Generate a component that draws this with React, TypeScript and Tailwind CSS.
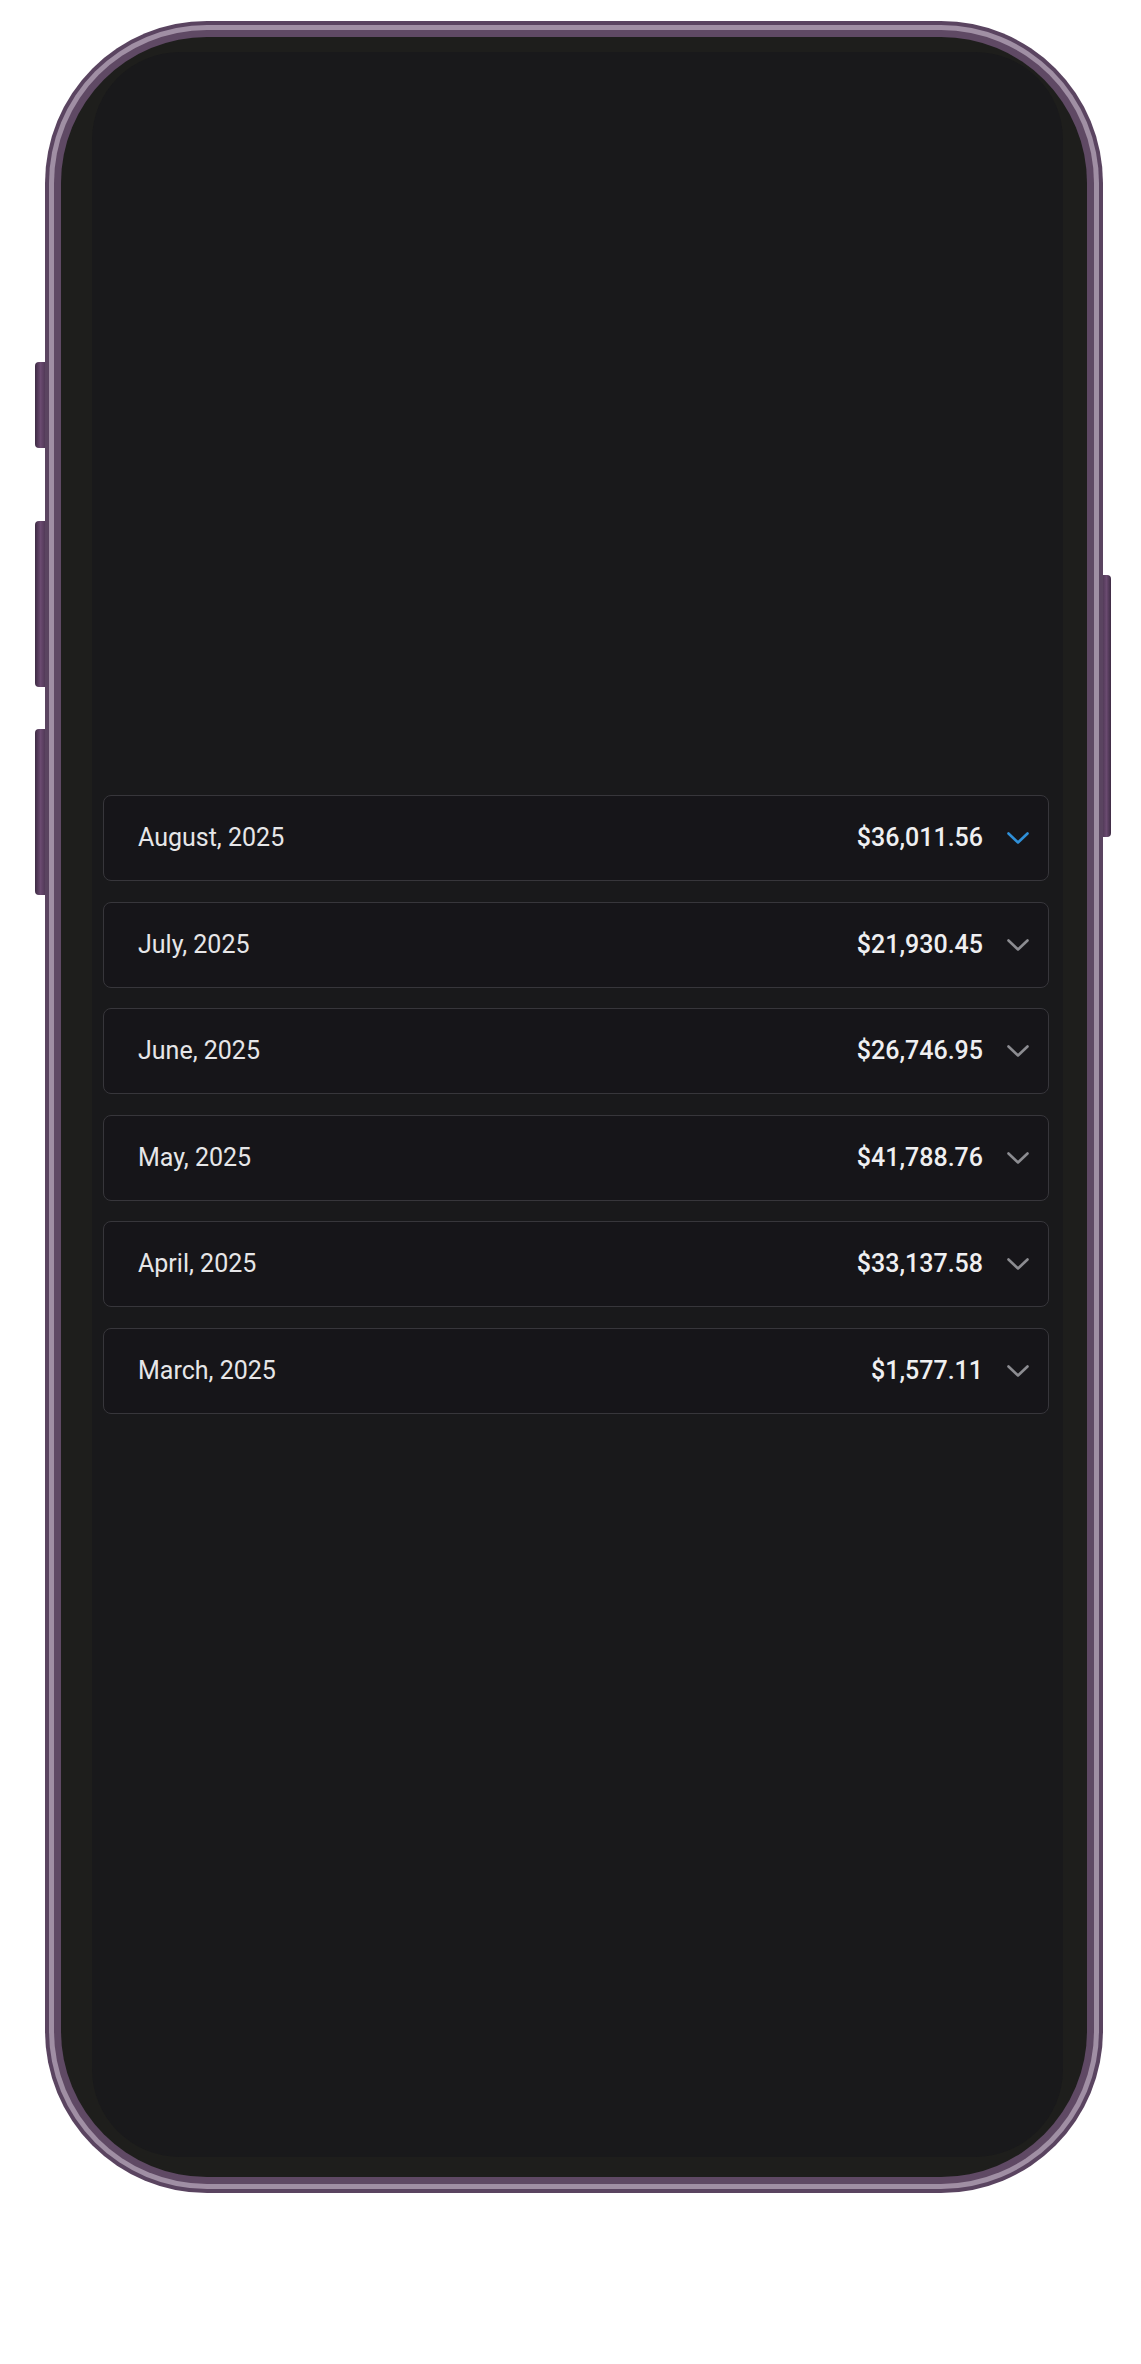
const months = [
  { label: "August, 2025", total: "$36,011.56", open: true },
  { label: "July, 2025", total: "$21,930.45", open: false },
  { label: "June, 2025", total: "$26,746.95", open: false },
  { label: "May, 2025", total: "$41,788.76", open: false },
  { label: "April, 2025", total: "$33,137.58", open: false },
  { label: "March, 2025", total: "$1,577.11", open: false },
];

const Chevron = ({ active }: { active: boolean }) => (
  <svg
    width="22"
    height="12"
    viewBox="0 0 22 12"
    fill="none"
    className={active ? "text-[#2f8fd8]" : "text-[#8c8c91]"}
  >
    <path
      d="M1.5 1.5 L11 10.5 L20.5 1.5"
      stroke="currentColor"
      strokeWidth="2.6"
      strokeLinecap="round"
      strokeLinejoin="round"
    />
  </svg>
);

const MonthRow = ({
  label,
  total,
  open,
}: {
  label: string;
  total: string;
  open: boolean;
}) => (
  <div className="flex items-center justify-between h-[86px] border border-[#37363b] rounded-[8px] bg-[#161519] pl-[34px] pr-[19px]">
    <span className="text-[25px] text-[#e6e6e8]">{label}</span>
    <div className="flex items-center gap-[24px]">
      <span className="text-[25px] font-medium text-[#efeff1]">{total}</span>
      <Chevron active={open} />
    </div>
  </div>
);

export default function App() {
  return (
    <div
      className="w-[1141px] h-[2364px] bg-white pl-[45px] pt-[21px]"
      style={{ fontFamily: "Roboto, 'Liberation Sans', sans-serif" }}
    >
      <div className="relative w-[1058px] h-[2172px]">
        {/* side buttons */}
        <div className="absolute left-[-10px] top-[341px] w-[11px] h-[86px] rounded-l-[4px] bg-gradient-to-r from-[#3e2b44] via-[#6a4a70] to-[#4d3653]" />
        <div className="absolute left-[-10px] top-[500px] w-[11px] h-[166px] rounded-l-[4px] bg-gradient-to-r from-[#3e2b44] via-[#6a4a70] to-[#4d3653]" />
        <div className="absolute left-[-10px] top-[708px] w-[11px] h-[166px] rounded-l-[4px] bg-gradient-to-r from-[#3e2b44] via-[#6a4a70] to-[#4d3653]" />
        <div className="absolute right-[-8px] top-[554px] w-[9px] h-[262px] rounded-r-[4px] bg-gradient-to-r from-[#4d3653] via-[#6a4a70] to-[#3e2b44]" />

        {/* frame rings */}
        <div className="relative h-full rounded-[162px] bg-[#5a4460] p-[4px]">
          <div className="h-full rounded-[158px] bg-[#a08fa4] p-[5px]">
            <div className="h-full rounded-[153px] bg-[#5f4964] p-[7px]">
              <div className="h-full rounded-[146px] bg-[#1e1e1c] pt-[15px] pl-[31px] pr-[24px] pb-[20px]">
                <div className="h-full rounded-[88px] bg-[#19191b] pt-[743px] pl-[11px]">
                  <div className="flex flex-col gap-[20.5px] w-[946px]">
                    {months.map((m) => (
                      <MonthRow key={m.label} {...m} />
                    ))}
                  </div>
                </div>
              </div>
            </div>
          </div>
        </div>
      </div>
    </div>
  );
}
